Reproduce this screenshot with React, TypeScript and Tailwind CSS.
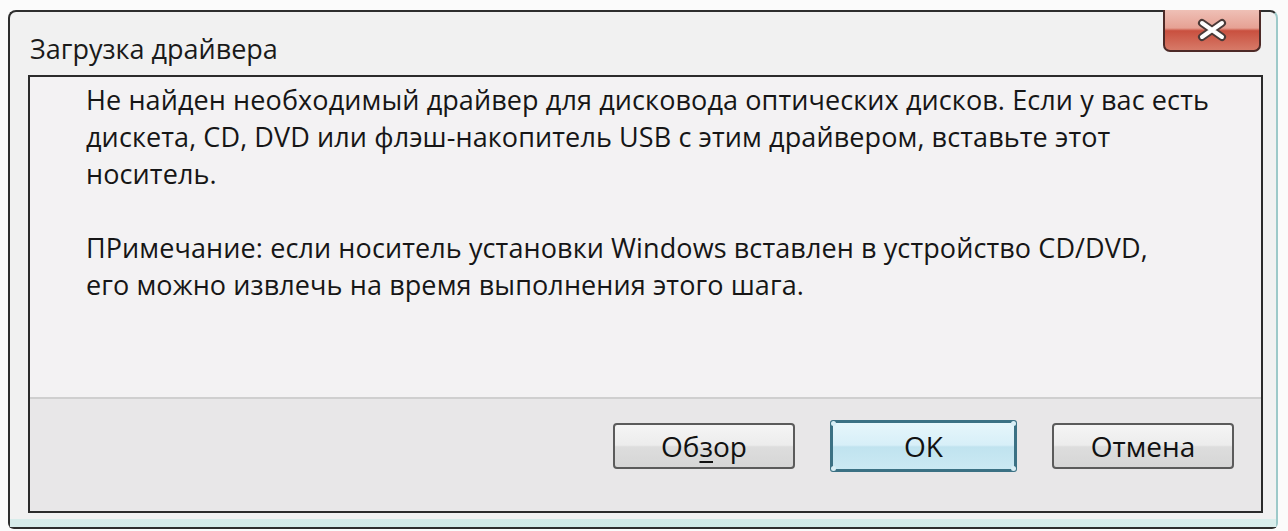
function CloseGlyph() {
  return (
    <svg width="36" height="24" viewBox="0 0 36 24">
      <path d="M8 5 L28 19 M28 5 L8 19" stroke="#4a3a38" strokeWidth="8" strokeLinecap="round" />
      <path d="M8 5 L28 19 M28 5 L8 19" stroke="#ffffff" strokeWidth="4" strokeLinecap="round" />
    </svg>
  );
}

function Button({ children, focused }: { children: React.ReactNode; focused?: boolean }) {
  if (focused) {
    return (
      <div className="relative flex h-[52px] w-[187px] items-center justify-center rounded-[3px] border-[3px] border-[#3b7184] bg-[linear-gradient(to_bottom,#e6f6fb_0%,#d7eff8_48%,#c0e3ef_52%,#cbe9f3_100%)] text-[28px] text-[#111]">
        <span className="absolute left-[-2px] top-[-2px] h-[5px] w-[5px] rounded-full bg-[#d8eef5]" />
        <span className="absolute right-[-2px] top-[-2px] h-[5px] w-[5px] rounded-full bg-[#d8eef5]" />
        <span className="absolute bottom-[-2px] left-[-2px] h-[5px] w-[5px] rounded-full bg-[#d8eef5]" />
        <span className="absolute bottom-[-2px] right-[-2px] h-[5px] w-[5px] rounded-full bg-[#d8eef5]" />
        {children}
      </div>
    );
  }
  return (
    <div className="flex h-[46px] w-[182px] items-center justify-center rounded-[4px] border-2 border-[#5b5b5b] bg-[linear-gradient(to_bottom,#f5f5f5_0%,#ececec_48%,#dddddd_52%,#d6d6d6_100%)] text-[28px] text-[#111]">
      {children}
    </div>
  );
}

export default function App() {
  return (
    <div className="h-[531px] w-[1288px] overflow-hidden bg-[#fbfbfb] pl-[8px] pt-[10px] font-['Open_Sans',sans-serif]">
      <div className="flex h-[519px] w-[1270px] flex-col rounded-t-[8px] rounded-b-[6px] border-2 border-[#2e2e2e] border-r-[#9dc9c9] border-b-[#2e2e2e] bg-[#f1f1f1]">
        {/* title bar */}
        <div className="flex h-[63px] shrink-0 items-start justify-between">
          <div className="pl-[20px] pt-[21px] text-[27px] leading-[32px] text-[#1a1a1a]">Загрузка драйвера</div>
          <div className="mr-[15px] mt-[-2px] flex h-[42px] w-[98px] items-center justify-center rounded-b-[7px] border-2 border-t-0 border-[#4d2a27] bg-[linear-gradient(to_bottom,#efc0b6_0%,#e6a194_45%,#c9503f_52%,#d77a68_100%)]">
            <CloseGlyph />
          </div>
        </div>

        {/* content panel */}
        <div className="ml-[18px] flex h-[439px] w-[1235px] flex-col border-2 border-[#2b2b2b] bg-[#f3f2f3]">
          <div className="h-[320px] shrink-0 pl-[56px] pr-[10px] pt-[4px] text-[27px] leading-[37px] tracking-[0.1px] text-[#161616]">
            <p>
              Не найден необходимый драйвер для дисковода оптических дисков. Если у вас есть
              <br />
              дискета, CD, DVD или флэш-накопитель USB с этим драйвером, вставьте этот
              <br />
              носитель.
            </p>
            <p className="mt-[37px]">
              ПРимечание: если носитель установки Windows вставлен в устройство CD/DVD,
              <br />
              его можно извлечь на время выполнения этого шага.
            </p>
          </div>
          <div className="flex flex-1 items-start justify-end gap-[35px] border-t-2 border-[#cfcfcf] bg-[#e8e7e8] pr-[27px] pt-[24px]">
            <Button>
              <span>
                Об<span className="underline underline-offset-4">з</span>ор
              </span>
            </Button>
            <div className="-mt-[3px]">
              <Button focused>OK</Button>
            </div>
            <Button>Отмена</Button>
          </div>
        </div>
        <div className="mt-[6px] h-[8px] bg-[linear-gradient(to_right,#d7ecea,#cfe9e6,#d9eeec)]" />
      </div>
    </div>
  );
}
